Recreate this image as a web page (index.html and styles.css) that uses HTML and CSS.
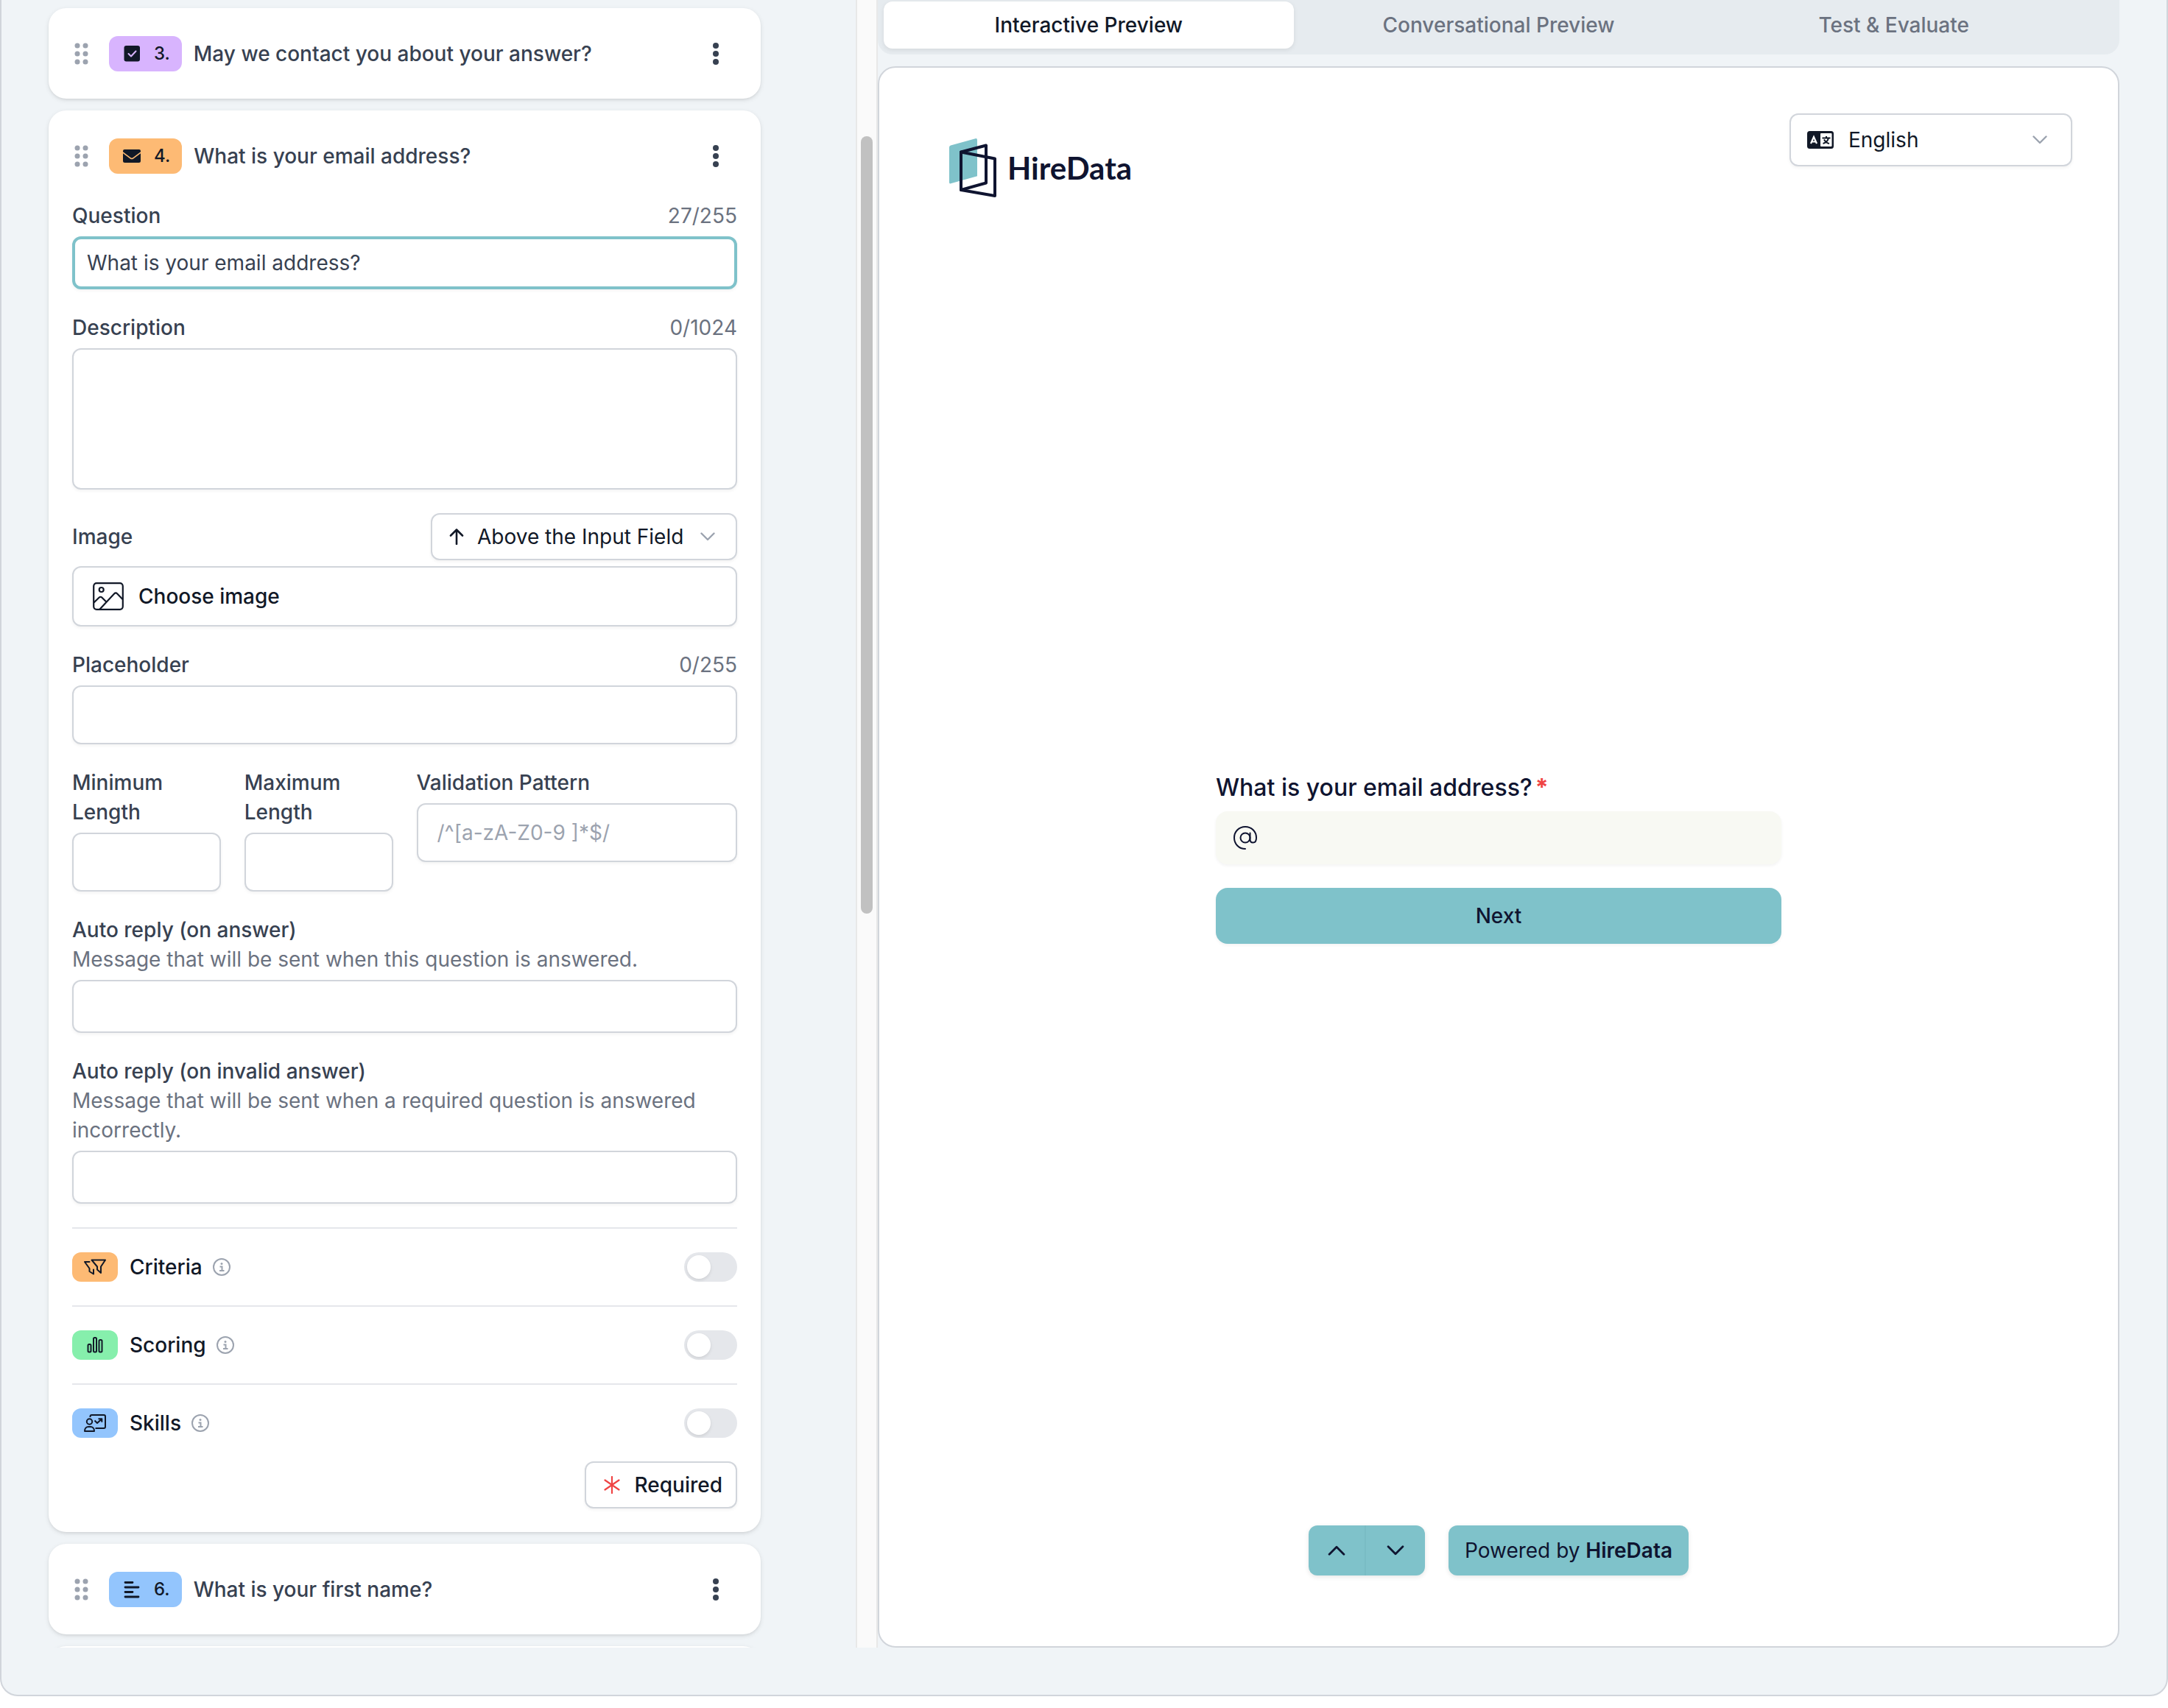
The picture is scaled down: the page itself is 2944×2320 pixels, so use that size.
FILE: index.html
```html
<!DOCTYPE html>
<html lang="en">
<head>
<meta charset="utf-8">
<meta name="viewport" content="width=device-width, initial-scale=1">
<title>HireData – Form builder</title>
<link rel="stylesheet" href="styles.css">
</head>
<body>
<svg class="sprite" aria-hidden="true">
  <symbol id="grip" viewBox="0 0 34 32"><g fill="currentColor"><circle cx="7" cy="5" r="3.5"/><circle cx="18" cy="5" r="3.5"/><circle cx="7" cy="16" r="3.5"/><circle cx="18" cy="16" r="3.5"/><circle cx="7" cy="27" r="3.5"/><circle cx="18" cy="27" r="3.5"/></g></symbol>
  <symbol id="kebab" viewBox="0 0 8 32"><g fill="currentColor"><circle cx="4" cy="5" r="4"/><circle cx="4" cy="16" r="4"/><circle cx="4" cy="27" r="4"/></g></symbol>
  <symbol id="chevron" viewBox="0 0 20 12"><path d="M1.500 1.500 10 10l8.500-8.500" fill="none" stroke="currentColor" stroke-width="2.400" stroke-linecap="round" stroke-linejoin="round"/></symbol>
  <symbol id="info" viewBox="0 0 24 24"><circle cx="12" cy="12" r="11" fill="none" stroke="currentColor" stroke-width="2"/><path d="M9.500 11.500h3V17M9 17h6.500" fill="none" stroke="currentColor" stroke-width="2"/><circle cx="12" cy="7.500" r="1.500" fill="currentColor"/></symbol>
</svg>
<main class="frame">
  <section class="editor" aria-label="Questions">
    <div class="list">
      <article class="card">
        <header class="card-head">
          <svg class="grip"><use href="#grip"/></svg>
          <span class="tag tag-purple"><svg class="tag-icon" viewBox="0 0 30 24"><rect x="4.500" y="1" width="21.500" height="21.500" rx="3" fill="#111827"/><path d="M10.500 12l3.500 3.500 6.500-7" fill="none" stroke="#d8b4fe" stroke-width="2" stroke-linecap="round" stroke-linejoin="round"/></svg>3.</span>
          <h2 class="card-title">May we contact you about your answer?</h2>
          <button class="kebab" aria-label="More options"><svg><use href="#kebab"/></svg></button>
        </header>
      </article>

      <article class="card">
        <header class="card-head">
          <svg class="grip"><use href="#grip"/></svg>
          <span class="tag tag-orange"><svg class="tag-icon" viewBox="0 0 30 24"><path d="M5 3h20a2.200 2.200 0 0 1 2 2v1.200L16.300 14.200a2.200 2.200 0 0 1-2.600 0L3 6.200V5a2.200 2.200 0 0 1 2-2z" fill="#111827"/><path d="M3 8.300l9.700 7.200a3.800 3.800 0 0 0 4.600 0L27 8.300V18.500a2.500 2.500 0 0 1-2.500 2.500h-19A2.500 2.500 0 0 1 3 18.500z" fill="#111827"/></svg>4.</span>
          <h2 class="card-title">What is your email address?</h2>
          <button class="kebab" aria-label="More options"><svg><use href="#kebab"/></svg></button>
        </header>
        <form class="card-body">
          <div class="field">
            <div class="field-top"><label for="question">Question</label><span class="count">27/255</span></div>
            <input class="control control-focus" id="question" type="text" value="What is your email address?">
          </div>
          <div class="field">
            <div class="field-top"><label for="description">Description</label><span class="count">0/1024</span></div>
            <textarea class="control control-area" id="description"></textarea>
          </div>
          <div class="field">
            <div class="field-top">
              <label for="position">Image</label>
              <div class="picker picker-small">
                <svg class="arrow" viewBox="0 0 20 22"><path d="M10 21V2M2 9.500L10 1.500l8 8" fill="none" stroke="currentColor" stroke-width="2.600" stroke-linecap="round" stroke-linejoin="round"/></svg>
                <select id="position"><option>Above the Input Field</option></select>
                <svg class="chevron"><use href="#chevron"/></svg>
              </div>
            </div>
            <button class="choose" type="button"><svg viewBox="0 0 42 38"><g fill="none" stroke="currentColor" stroke-width="2.200" stroke-linejoin="round"><rect x="1.200" y="1.200" width="39.600" height="35.600" rx="4"/><circle cx="11.700" cy="10" r="3"/><path d="M1.500 27.500l7.200-7a2.500 2.500 0 0 1 3.600 0l6 6M9.500 36.500L29.300 15.200a2.500 2.500 0 0 1 3.700 0l7.500 7.800"/></g></svg>Choose image</button>
          </div>
          <div class="field">
            <div class="field-top"><label for="placeholder">Placeholder</label><span class="count">0/255</span></div>
            <input class="control control-tall" id="placeholder" type="text">
          </div>
          <div class="limits">
            <div class="field"><label for="min">Minimum Length</label><input class="control control-tall" id="min" type="text"></div>
            <div class="field"><label for="max">Maximum Length</label><input class="control control-tall" id="max" type="text"></div>
            <div class="field field-wide"><label for="pattern">Validation Pattern</label><input class="control control-tall" id="pattern" type="text" placeholder="/^[a-zA-Z0-9 ]*$/"></div>
          </div>
          <div class="field">
            <label for="reply">Auto reply (on answer)<small>Message that will be sent when this question is answered.</small></label>
            <input class="control" id="reply" type="text">
          </div>
          <div class="field">
            <label for="reply-invalid">Auto reply (on invalid answer)<small>Message that will be sent when a required question is answered incorrectly.</small></label>
            <input class="control" id="reply-invalid" type="text">
          </div>
          <div class="option">
            <span class="chip chip-orange"><svg viewBox="0 0 30 24"><g fill="none" stroke="#111827" stroke-width="2" stroke-linejoin="round" stroke-linecap="round"><path d="M10.500 2.500H29l-6 9v8.500l-5-4.500v-4z"/><path d="M7.500 5H1l6.500 9v4l5.500 3.500v-6"/></g></svg></span>
            <label for="criteria">Criteria</label><svg class="info"><use href="#info"/></svg>
            <input class="toggle" id="criteria" type="checkbox">
          </div>
          <div class="option">
            <span class="chip chip-green"><svg viewBox="0 0 30 24"><g fill="none" stroke="#111827" stroke-width="2"><rect x="5.500" y="11" width="4" height="10.500" rx="1.500"/><rect x="13" y="2" width="4" height="19.500" rx="1.500"/><rect x="20.500" y="5" width="4" height="16.500" rx="1.500"/></g></svg></span>
            <label for="scoring">Scoring</label><svg class="info"><use href="#info"/></svg>
            <input class="toggle" id="scoring" type="checkbox">
          </div>
          <div class="option">
            <span class="chip chip-blue"><svg viewBox="0 0 30 24"><g fill="none" stroke="#111827" stroke-width="2" stroke-linejoin="round"><circle cx="7.500" cy="10" r="3.700"/><path d="M1 23c0-4 2.500-6 5-6h3c2.500 0 5 2 5 6z"/><path d="M8.500 4V3a2 2 0 0 1 2-2H27a2 2 0 0 1 2 2v14a2 2 0 0 1-2 2H15.500"/><path d="M14.500 8.500l3.500 3.500 6-5.500M19.500 6.300h4.800v4.500"/></g></svg></span>
            <label for="skills">Skills</label><svg class="info"><use href="#info"/></svg>
            <input class="toggle" id="skills" type="checkbox">
          </div>
          <button class="required" type="button"><svg viewBox="0 0 22 24"><path d="M11 1v22M1.500 5.500l19 13M20.500 5.500l-19 13" stroke="#ef4444" stroke-width="2.200" stroke-linecap="round"/></svg>Required</button>
        </form>
      </article>

      <article class="card">
        <header class="card-head">
          <svg class="grip"><use href="#grip"/></svg>
          <span class="tag tag-blue"><svg class="tag-icon" viewBox="0 0 30 24"><path d="M6 2.500h10M6 9h18M6 15.500h10M6 22h18" stroke="#111827" stroke-width="2.800" stroke-linecap="round"/></svg>6.</span>
          <h2 class="card-title">What is your first name?</h2>
          <button class="kebab" aria-label="More options"><svg><use href="#kebab"/></svg></button>
        </header>
      </article>
      <article class="card card-next"></article>
    </div>
    <div class="scrollbar"><div class="thumb"></div></div>
  </section>

  <section class="viewer" aria-label="Preview">
    <div class="tabs" role="tablist">
      <button class="tab tab-active" role="tab" aria-selected="true">Interactive Preview</button>
      <button class="tab" role="tab" aria-selected="false">Conversational Preview</button>
      <button class="tab tab-last" role="tab" aria-selected="false">Test &amp; Evaluate</button>
    </div>
    <div class="preview">
      <header class="preview-head">
        <div class="logo">
          <svg viewBox="0 0 64 80"><path d="M0 12q0-2 2-2.500L35.500 0.200q2.500-.5 2.500 2v49L2 61.300q-2 .5-2-1.500z" fill="#7fc2ca"/><g fill="none" stroke="#0f1430" stroke-width="4" stroke-linejoin="round"><path d="M16 18.500L50 9.500V60.500L16 70z"/><path d="M16 18.500L62 27.500V78L16 70z"/></g></svg>
          <span>HireData</span>
        </div>
        <div class="picker picker-wide">
          <svg class="lang" viewBox="0 0 36 24"><rect x="0" y="0" width="36" height="24" rx="3.500" fill="#111827"/><rect x="18" y="3" width="15.500" height="18" rx="1" fill="#fff"/><path d="M5 17L9 8l4 9M6.500 14.500h5" fill="none" stroke="#fff" stroke-width="2.200"/><path d="M20.500 9.500h11M26 7v2.500M29 9.500c-1 4-4 6.500-7.500 7.500M23 11.500c1.500 3 4 5 7 5.500" fill="none" stroke="#111827" stroke-width="2"/></svg>
          <select aria-label="Language"><option>English</option></select>
          <svg class="chevron"><use href="#chevron"/></svg>
        </div>
      </header>
      <form class="answer">
        <label for="email">What is your email address?<span class="star">*</span></label>
        <div class="answer-box">
          <svg viewBox="0 0 32 32"><g fill="none" stroke="currentColor" stroke-width="2" stroke-linecap="round"><circle cx="16" cy="16" r="6.500"/><path d="M22.500 9.500V18c0 3 1.500 4.500 4 4.500s4.500-2 4.500-6.500C31 7.500 24.500 1 16 1S1 7.500 1 16s6.500 15 15 15"/></g></svg>
          <input id="email" type="email">
        </div>
        <button class="next" type="button">Next</button>
      </form>
      <footer class="preview-foot">
        <div class="pager">
          <button aria-label="Previous"><svg class="up"><use href="#chevron"/></svg></button>
          <button aria-label="Next question"><svg><use href="#chevron"/></svg></button>
        </div>
        <a class="powered" href="#">Powered by <b>HireData</b></a>
      </footer>
    </div>
  </section>
</main>
</body>
</html>
```
FILE: styles.css
```css
* { box-sizing: border-box; }

body {
  margin: 0;
  background: #fff;
  color: #111827;
  font: 400 28px/40px Inter, "Liberation Sans", sans-serif;
}

button, input, select, textarea { font: inherit; color: inherit; margin: 0; }
button { cursor: pointer; border: 0; background: none; padding: 0; }
svg { display: block; flex: none; }
.sprite { display: none; }

.frame {
  display: grid;
  grid-template-columns: minmax(0, 17fr) minmax(0, 25fr);
  padding-bottom: 64px;
  border: 2px solid #d1d5db;
  border-top: 0;
  border-radius: 0 0 24px 24px;
  background: #f0f4f7;
}

/* Question list */
.editor {
  display: flex;
  height: calc(100vh - 82px);
  overflow: hidden;
}
.list {
  flex: 1;
  min-width: 0;
  display: flex;
  flex-direction: column;
  gap: 16px;
  padding: 11px 129px 0 64px;
}
.scrollbar {
  width: 30px;
  display: grid;
  grid-template-rows: 185fr 1056fr 997fr;
  justify-items: center;
  background: #fafafa;
  border: solid #e8e8e8;
  border-width: 0 2px;
}
.thumb {
  grid-row: 2;
  width: 16px;
  border-radius: 8px;
  background: #c1c1c1;
}

.card {
  flex: none;
  padding: 0 32px;
  border-radius: 24px;
  background: #fff;
  box-shadow: 0 2px 6px rgba(0, 0, 0, .1), 0 2px 4px -2px rgba(0, 0, 0, .1);
}
.card-next { height: 123px; }
.card-head {
  display: flex;
  align-items: center;
  gap: 16px;
  padding: 38px 0 37px;
}
.grip { width: 34px; height: 32px; color: #9ca3af; }
.card-title {
  flex: 1;
  margin: 0;
  font-size: 28px;
  font-weight: 500;
  color: #374151;
}
.kebab { padding: 0 25px; color: #374151; }
.kebab svg { width: 8px; height: 32px; }

.tag {
  display: flex;
  align-items: center;
  gap: 15px;
  height: 48px;
  padding: 0 16px;
  border-radius: 12px;
  font-size: 24px;
  font-weight: 500;
}
.tag-icon { width: 30px; height: 24px; }
.tag-purple { background: #d8b4fe; }
.tag-orange, .chip-orange { background: #fdba74; }
.tag-blue, .chip-blue { background: #93c5fd; }
.chip-green { background: #86efac; }

/* Question form */
.card-body {
  display: flex;
  flex-direction: column;
  gap: 32px;
  padding-bottom: 32px;
}
.field { display: flex; flex-direction: column; gap: 8px; min-width: 0; }
.field label { font-weight: 500; color: #374151; }
.field small { display: block; font-size: 28px; font-weight: 400; color: #6b7280; }
.field-top { display: flex; align-items: center; justify-content: space-between; }
.count { color: #6b7280; }

.control {
  width: 100%;
  height: 72px;
  padding: 0 18px;
  border: 2px solid #d1d5db;
  border-radius: 12px;
  background: #fff;
  color: #374151;
  box-shadow: 0 2px 4px rgba(0, 0, 0, .05);
  outline: 0;
}
.control::placeholder { color: #9ca3af; opacity: 1; }
.control-focus { padding: 0 16px; border: 4px solid #7fc2ca; }
.control-tall { height: 80px; padding: 0 26px; }
.control-area { display: block; height: 192px; resize: none; }

.limits {
  display: grid;
  grid-template-columns: repeat(4, minmax(0, 1fr));
  gap: 32px;
  align-items: start;
}
.field-wide { grid-column: span 2; }

.picker {
  display: flex;
  align-items: center;
  border: 2px solid #d1d5db;
  border-radius: 12px;
  background: #fff;
  box-shadow: 0 2px 4px rgba(0, 0, 0, .05);
}
.picker select {
  flex: 1;
  height: 60px;
  padding: 0;
  border: 0;
  outline: 0;
  background: none;
  appearance: none;
}
.picker-small { height: 64px; gap: 18px; padding: 0 28px 0 23px; }
.picker-wide { height: 72px; width: 384px; gap: 20px; padding: 0 32px 0 22px; }
.arrow { width: 20px; height: 22px; }
.lang { width: 36px; height: 24px; }
.chevron { width: 20px; height: 12px; color: #9ca3af; }
.picker-small .chevron { margin-left: 4px; }

.choose {
  display: flex;
  align-items: center;
  gap: 20px;
  height: 82px;
  padding: 0 26px;
  border: 2px solid #d1d5db;
  border-radius: 12px;
  background: #fff;
  font-weight: 500;
  box-shadow: 0 2px 4px rgba(0, 0, 0, .05);
}
.choose svg { width: 42px; height: 38px; }

.option {
  display: flex;
  align-items: center;
  padding-top: 32px;
  border-top: 2px solid #e5e7eb;
}
.option label { margin: 0 14px 0 16px; font-weight: 500; }
.chip {
  display: grid;
  place-items: center;
  width: 62px;
  height: 40px;
  border-radius: 12px;
}
.chip svg { width: 30px; height: 24px; }
.info { width: 24px; height: 24px; color: #9ca3af; }
.toggle {
  appearance: none;
  width: 72px;
  height: 40px;
  margin-left: auto;
  padding: 4px;
  border-radius: 20px;
  background: #e5e7eb;
}
.toggle::before {
  content: "";
  display: block;
  width: 32px;
  height: 32px;
  border-radius: 50%;
  background: #fff;
  box-shadow: 0 2px 4px rgba(0, 0, 0, .1);
}
.toggle:checked { background: #7fc2ca; }
.toggle:checked::before { margin-left: auto; }

.required {
  align-self: flex-end;
  display: flex;
  align-items: center;
  gap: 20px;
  height: 64px;
  padding: 0 18px 0 24px;
  border: 2px solid #d1d5db;
  border-radius: 12px;
  background: #fff;
  font-weight: 500;
  box-shadow: 0 2px 4px rgba(0, 0, 0, .05);
}
.required svg { width: 22px; height: 24px; }

/* Preview pane */
.viewer {
  display: flex;
  flex-direction: column;
  gap: 16px;
  padding-right: 64px;
}
.tabs {
  display: grid;
  grid-template-columns: repeat(3, minmax(0, 1fr));
  padding: 2px 8px 8px;
  border-radius: 0 0 20px 20px;
  background: #e6ebef;
}
.tab {
  height: 64px;
  border-radius: 12px;
  font-weight: 500;
  color: #6b7280;
}
.tab-last { padding-right: 40px; }
.tab-active {
  background: #fff;
  color: #111827;
  box-shadow: 0 2px 6px rgba(0, 0, 0, .08);
}
.preview {
  flex: 1;
  display: grid;
  grid-template-rows: minmax(0, 1fr) auto minmax(0, 1fr);
  border: 2px solid #d1d5db;
  border-radius: 24px;
  background: #fff;
  color: #0f1430;
}
.preview-head {
  display: flex;
  align-items: flex-start;
  justify-content: space-between;
  padding: 62px 62px 0 95px;
}
.logo {
  display: flex;
  align-items: center;
  gap: 15px;
  padding-top: 34px;
  font: 700 42px/80px Lato, Inter, sans-serif;
}
.logo svg { width: 64px; height: 80px; }
.picker-wide { color: #111827; }

.answer {
  justify-self: center;
  display: flex;
  flex-direction: column;
  width: 768px;
  max-width: 100%;
}
.answer label {
  margin-bottom: 8px;
  font-size: 32px;
  line-height: 48px;
  font-weight: 500;
}
.star { margin-left: 4px; color: #ef4444; font-weight: 700; }
.answer-box {
  display: flex;
  align-items: center;
  gap: 16px;
  height: 72px;
  margin-bottom: 32px;
  padding: 0 24px;
  border-radius: 16px;
  background: #f8f9f3;
  box-shadow: 0 2px 4px rgba(0, 0, 0, .05);
}
.answer-box svg { width: 32px; height: 32px; }
.answer-box input { flex: 1; border: 0; outline: 0; background: none; }
.next {
  height: 76px;
  border-radius: 16px;
  background: #7fc2ca;
  font-weight: 500;
  box-shadow: 0 2px 4px rgba(0, 0, 0, .05);
}

.preview-foot {
  align-self: end;
  display: flex;
  justify-content: center;
  gap: 32px;
  padding-bottom: 96px;
}
.pager, .powered {
  display: flex;
  height: 68px;
  border-radius: 12px;
  background: #7fc2ca;
  box-shadow: 0 2px 6px rgba(0, 0, 0, .1);
}
.pager button {
  display: grid;
  place-items: center;
  width: 80px;
}
.pager button:first-child { width: 78px; border-right: 2px solid #79bcc4; }
.pager svg { width: 24px; height: 14px; }
.up { transform: rotate(180deg); }
.powered {
  align-items: center;
  padding: 0 22px;
  color: inherit;
  text-decoration: none;
  white-space: pre;
}
.powered b { font-weight: 600; }
```
